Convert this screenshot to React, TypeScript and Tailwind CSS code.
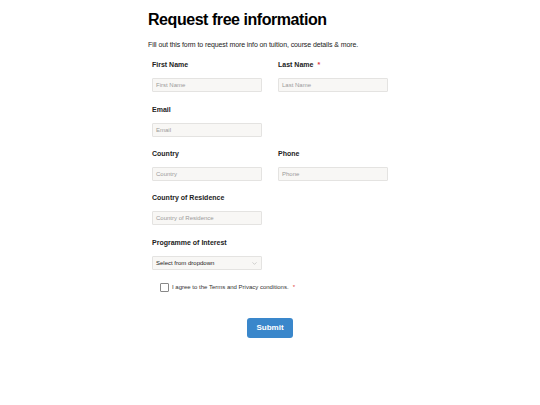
import { ChevronDown } from "lucide-react";

function Field({ label, placeholder, required }: { label: string; placeholder?: string; required?: boolean }) {
  return (
    <div className="w-[126px] shrink-0">
      <div className="h-[12px] text-[7px] leading-[12px] font-bold text-[#222]">
        {label}
        {required && <span className="ml-[4px] text-[#e0393e]">*</span>}
      </div>
      {placeholder && (
        <div className="mt-[7px] flex h-[14px] w-[110px] items-center rounded-[1px] border border-[#e4e3e1] bg-[#f8f7f5] px-[3px] text-[6px] text-[#9a9a9a]">
          {placeholder}
        </div>
      )}
    </div>
  );
}

export default function App() {
  return (
    <div className="min-h-[405px] w-full bg-white font-['Liberation_Sans',Arial,sans-serif]">
      <div className="mx-auto w-[244px] pt-[10px]">
        <h1 className="text-[16px] leading-[20px] font-bold tracking-[-0.45px] text-black">Request free information</h1>
        <p className="mt-[10px] text-[7px] leading-[10px] tracking-[-0.1px] text-[#222]">
          Fill out this form to request more info on tuition, course details &amp; more.
        </p>

        <div className="mt-[9px] flex flex-col px-[4px]">
          <div className="flex">
            <Field label="First Name" placeholder="First Name" />
            <Field label="Last Name" placeholder="Last Name" required />
          </div>
          <div className="mt-[12px] flex">
            <Field label="Email" placeholder="Email" />
          </div>
          <div className="mt-[11px] flex">
            <Field label="Country" placeholder="Country" />
            <Field label="Phone" placeholder="Phone" />
          </div>
          <div className="mt-[11px] flex">
            <Field label="Country of Residence" placeholder="Country of Residence" />
          </div>
          <div className="mt-[12px] w-[126px]">
            <div className="h-[12px] text-[7px] leading-[12px] font-bold text-[#222]">Programme of Interest</div>
            <div className="mt-[7px] flex h-[14px] w-[110px] items-center justify-between rounded-[1px] border border-[#e4e3e1] bg-[#f8f7f5] px-[3px] text-[6px] text-[#222]">
              <span>Select from dropdown</span>
              <ChevronDown className="h-[7px] w-[7px] text-[#999]" strokeWidth={1.5} />
            </div>
          </div>
        </div>

        <label className="mt-[13px] ml-[12px] flex items-center gap-[3px] text-[6px] text-[#333]">
          <span className="h-[9px] w-[9px] rounded-[1px] border border-[#888] bg-white" />
          <span>I agree to the Terms and Privacy conditions.</span>
          <span className="ml-[1px] text-[#e0393e]">*</span>
        </label>

        <div className="mt-[26px] flex justify-center">
          <button className="h-[20px] w-[46px] rounded-[3px] bg-[#3a87cb] text-[8px] font-bold text-white">Submit</button>
        </div>
      </div>
    </div>
  );
}
